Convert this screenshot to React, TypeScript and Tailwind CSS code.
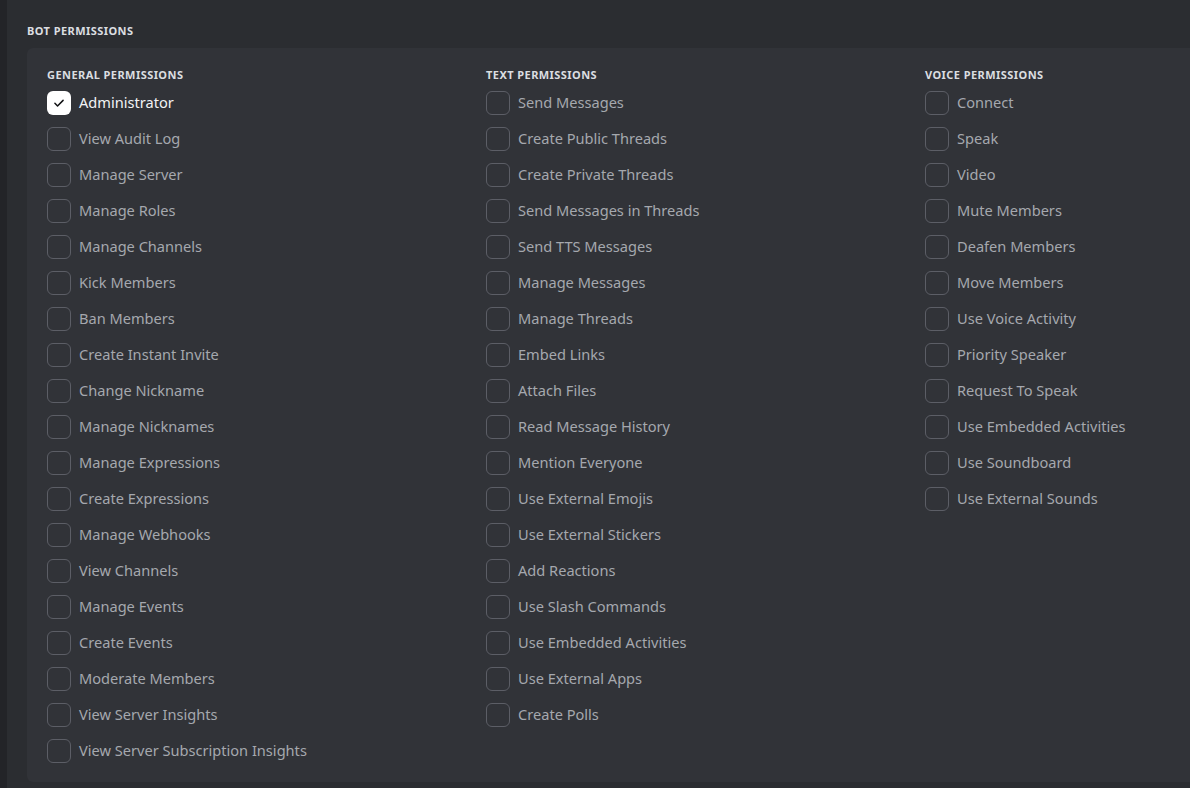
const GENERAL = [
  "Administrator",
  "View Audit Log",
  "Manage Server",
  "Manage Roles",
  "Manage Channels",
  "Kick Members",
  "Ban Members",
  "Create Instant Invite",
  "Change Nickname",
  "Manage Nicknames",
  "Manage Expressions",
  "Create Expressions",
  "Manage Webhooks",
  "View Channels",
  "Manage Events",
  "Create Events",
  "Moderate Members",
  "View Server Insights",
  "View Server Subscription Insights",
];

const TEXT = [
  "Send Messages",
  "Create Public Threads",
  "Create Private Threads",
  "Send Messages in Threads",
  "Send TTS Messages",
  "Manage Messages",
  "Manage Threads",
  "Embed Links",
  "Attach Files",
  "Read Message History",
  "Mention Everyone",
  "Use External Emojis",
  "Use External Stickers",
  "Add Reactions",
  "Use Slash Commands",
  "Use Embedded Activities",
  "Use External Apps",
  "Create Polls",
];

const VOICE = [
  "Connect",
  "Speak",
  "Video",
  "Mute Members",
  "Deafen Members",
  "Move Members",
  "Use Voice Activity",
  "Priority Speaker",
  "Request To Speak",
  "Use Embedded Activities",
  "Use Soundboard",
  "Use External Sounds",
];

function Row({ label, checked }: { label: string; checked?: boolean }) {
  return (
    <div className="flex items-center h-[36px] gap-[8px]">
      {checked ? (
        <div className="w-[24px] h-[24px] rounded-[6px] bg-white flex items-center justify-center">
          <svg width="14" height="14" viewBox="0 0 24 24" fill="none">
            <path d="M5 12.5l4.5 4.5L19 7.5" stroke="#111214" strokeWidth="2.6" strokeLinecap="round" strokeLinejoin="round" />
          </svg>
        </div>
      ) : (
        <div className="w-[24px] h-[24px] rounded-[6px] border border-[#5c5e66]" />
      )}
      <span className={`text-[14.6px] ${checked ? "text-[#f2f3f5]" : "text-[#a5a8ae]"}`}>{label}</span>
    </div>
  );
}

function Column({ title, items }: { title: string; items: string[] }) {
  return (
    <div className="w-[439px] shrink-0">
      <h3 className="text-[11px] font-bold uppercase text-[#dbdee1] tracking-[0.04em] leading-[14px] mb-[3px]">{title}</h3>
      {items.map((item, i) => (
        <Row key={item + i} label={item} checked={item === "Administrator"} />
      ))}
    </div>
  );
}

export default function App() {
  return (
    <div className="w-[1190px] h-[788px] overflow-hidden flex bg-[#2b2d31]" style={{ fontFamily: '"Noto Sans", sans-serif' }}>
      <div className="w-[7px] bg-[#232428] shrink-0" />
      <div className="flex-1 pl-[20px] pt-[24px]">
        <h2 className="text-[11px] font-bold uppercase text-[#dbdee1] tracking-[0.04em] leading-[14px] mb-[10px]">Bot Permissions</h2>
        <div className="bg-[#313338] rounded-l-[6px] h-[734px] pl-[20px] pt-[20px] flex">
          <Column title="General Permissions" items={GENERAL} />
          <Column title="Text Permissions" items={TEXT} />
          <Column title="Voice Permissions" items={VOICE} />
        </div>
      </div>
    </div>
  );
}
